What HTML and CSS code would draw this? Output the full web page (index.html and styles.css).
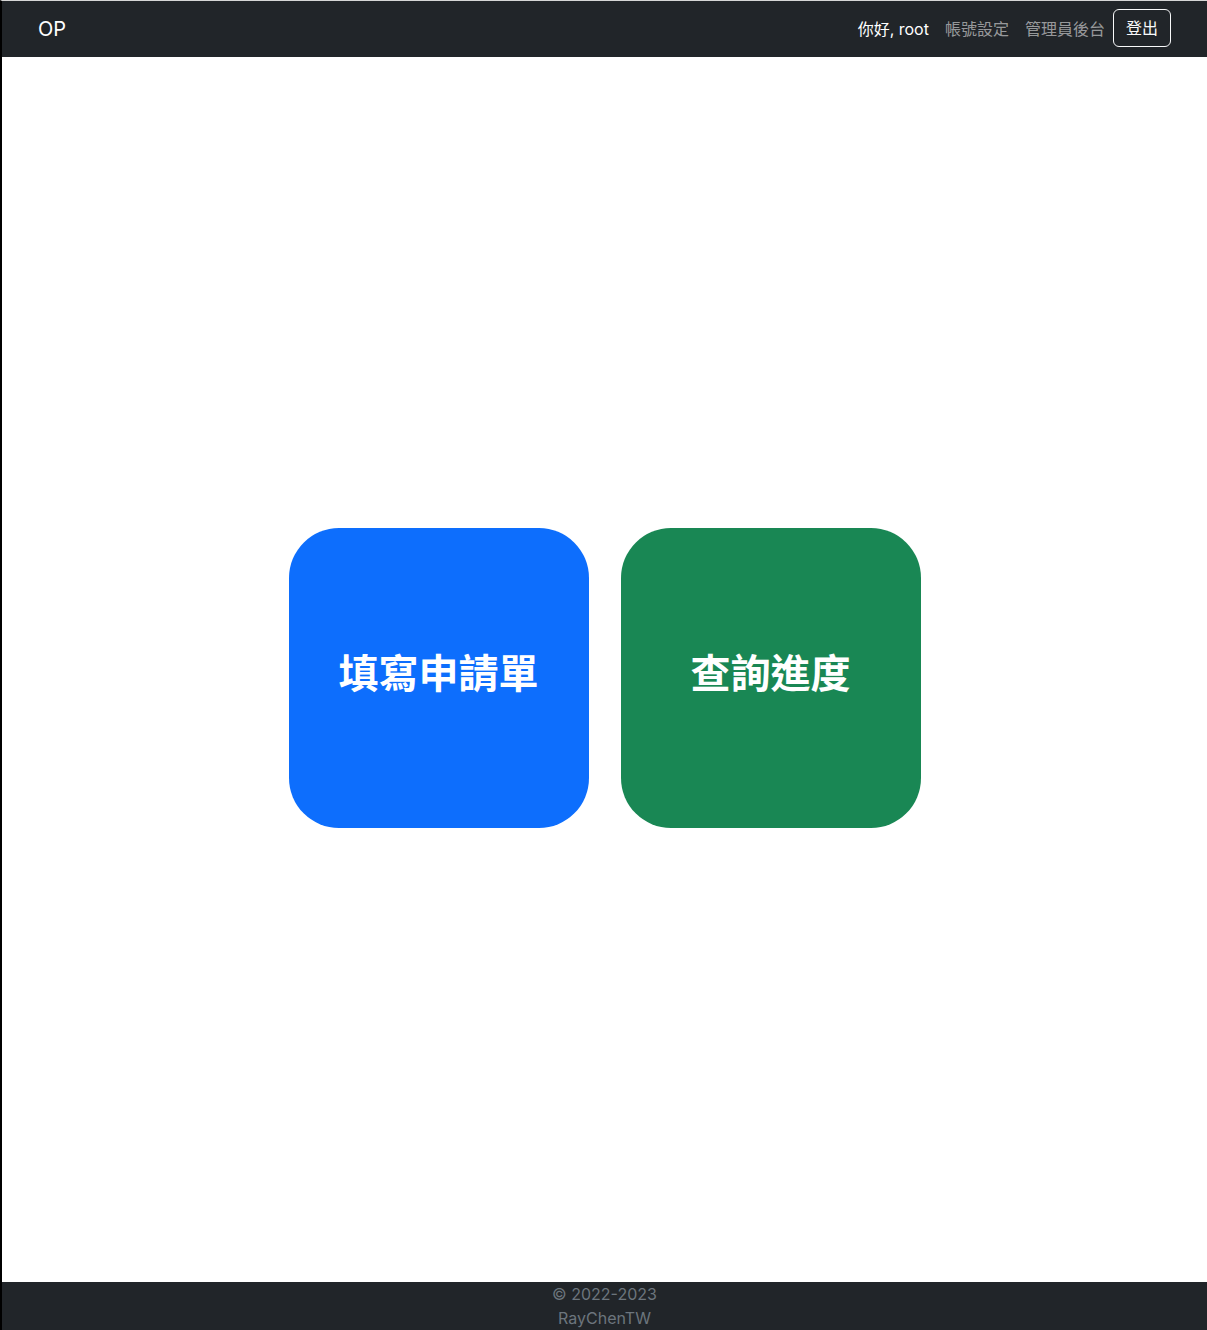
FILE: index.html
```html
<!DOCTYPE html>
<html lang="zh-Hant">
<head>
<meta charset="utf-8">
<title>OP</title>
<link rel="stylesheet" href="styles.css">
</head>
<body>
<div class="frame">
  <nav class="navbar">
    <a class="brand" href="#">OP</a>
    <div class="nav-right">
      <span class="nav-text">你好, root</span>
      <a class="nav-link" href="#">帳號設定</a>
      <a class="nav-link" href="#">管理員後台</a>
      <button class="btn-logout" type="button">登出</button>
    </div>
  </nav>
  <main class="main">
    <div class="tiles">
      <a class="tile tile-blue" href="#"><h1 class="tile-title">填寫申請單</h1></a>
      <a class="tile tile-green" href="#"><h1 class="tile-title">查詢進度</h1></a>
    </div>
  </main>
  <footer class="footer">
    <div>© 2022-2023</div>
    <div>RayChenTW</div>
  </footer>
</div>
</body>
</html>
```

FILE: styles.css
```css
* { box-sizing: border-box; }
html, body { margin: 0; padding: 0; }
body {
  font-family: Inter, "Noto Sans CJK TC", sans-serif;
  font-size: 16px;
  line-height: 1.5;
  color: #212529;
  background: #fff;
}
.frame {
  min-height: 1330px;
  display: flex;
  flex-direction: column;
  border-left: 2px solid #000;
  border-top: 1px solid #d6d6d6;
}
.navbar {
  height: 56px;
  background: #212529;
  display: flex;
  align-items: center;
  justify-content: space-between;
  padding: 0 36px 2px 36px;
}
.brand {
  color: #fff;
  text-decoration: none;
  font-size: 20px;
  line-height: 30px;
  position: relative;
  top: 1px;
}
.nav-right {
  display: flex;
  align-items: center;
}
.nav-text {
  color: #fff;
  padding: 9px 8px 7px;
}
.nav-link {
  color: rgba(255,255,255,.55);
  text-decoration: none;
  padding: 9px 8px 7px;
}
.btn-logout {
  font-family: inherit;
  font-size: 16px;
  line-height: 24px;
  padding: 6px 12px;
  color: #f8f9fa;
  background: transparent;
  border: 1px solid #f8f9fa;
  border-radius: 6px;
}
.main {
  flex: 1;
  display: flex;
  align-items: center;
  justify-content: center;
  padding-top: 17px;
}
.tiles {
  display: flex;
  gap: 32px;
}
.tile {
  width: 300px;
  height: 300px;
  border-radius: 50px;
  display: flex;
  align-items: center;
  justify-content: center;
  text-decoration: none;
  color: #fff;
}
.tile-blue { background: #0d6efd; }
.tile-green { background: #198754; }
.tile-title {
  margin: 0 0 8px 0;
  font-size: 40px;
  font-weight: 700;
  line-height: 1.2;
}
.footer {
  height: 48px;
  background: #212529;
  color: #6c757d;
  text-align: center;
  font-size: 16px;
  line-height: 24px;
}
```
